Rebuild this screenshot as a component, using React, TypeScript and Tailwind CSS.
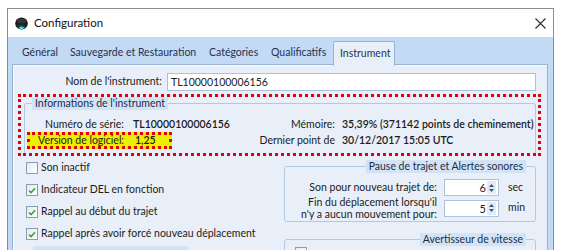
import React from "react";

const TABS = [
  { label: "Général", w: "w-[48px]" },
  { label: "Sauvegarde et Restauration", w: "w-[139px]" },
  { label: "Catégories", w: "w-[62px]" },
  { label: "Qualificatifs", w: "w-[69px]" },
];

function AppIcon() {
  return (
    <svg width="13" height="13" viewBox="0 0 13 13">
      <defs>
        <radialGradient id="glow" cx="0.5" cy="0.85" r="0.45">
          <stop offset="0" stopColor="#8ff6ff" />
          <stop offset="0.6" stopColor="#1fc8dc" />
          <stop offset="1" stopColor="#0b3f48" />
        </radialGradient>
      </defs>
      <ellipse cx="6.5" cy="6.5" rx="6.3" ry="6" fill="#1b1b1b" />
      <ellipse cx="6.5" cy="4" rx="4.5" ry="2.5" fill="#4a4a4a" opacity="0.6" />
      <ellipse cx="6.5" cy="9.6" rx="4.2" ry="2.4" fill="url(#glow)" />
    </svg>
  );
}

function CheckBox({ checked }: { checked?: boolean }) {
  return (
    <span className="w-[12px] h-[12px] shrink-0 border border-[#8c9db3] bg-gradient-to-br from-[#e4e9f0] to-white flex items-center justify-center">
      {checked && (
        <svg width="8" height="7" viewBox="0 0 8 7">
          <path d="M1 3.6 L3.1 5.6 L7 1.2" fill="none" stroke="#3aa53a" strokeWidth="1.6" />
        </svg>
      )}
    </span>
  );
}

function Spin({ value }: { value: string }) {
  return (
    <div className="w-[55px] h-[17px] border border-[#abc1dd] bg-white flex items-center">
      <span className="flex-1 text-right leading-[15px] text-[11px]">{value}</span>
      <span className="w-[9px] h-[13px] mr-[2px] ml-[1px] bg-[#e2ebf6] flex flex-col items-center justify-center gap-[2px]">
        <svg width="5" height="3" viewBox="0 0 5 3">
          <path d="M0 3 L2.5 0 L5 3 Z" fill="#3c5676" />
        </svg>
        <svg width="5" height="3" viewBox="0 0 5 3">
          <path d="M0 0 L2.5 3 L5 0 Z" fill="#3c5676" />
        </svg>
      </span>
    </div>
  );
}

export default function App() {
  return (
    <div className="w-[564px] h-[250px] bg-white overflow-hidden pt-[8px] pl-[7px] font-[Lato,sans-serif] text-[10.5px] text-[#1b1b1b]">
      <div className="w-[547px] h-[260px] border border-[#8d8d8d] border-b-0 bg-[#c3daf5]">
        {/* title bar */}
        <div className="h-[28px] bg-white flex items-center pl-[7px] pr-[7px]">
          <AppIcon />
          <span className="ml-[6px] text-[11.5px] text-[#111]">Configuration</span>
          <svg className="ml-auto" width="11" height="11" viewBox="0 0 11 11">
            <path d="M0.5 0.5 L10.5 10.5 M10.5 0.5 L0.5 10.5" stroke="#2b2b2b" strokeWidth="1.1" />
          </svg>
        </div>

        {/* tabs */}
        <div className="pt-[4px] pl-[7px] flex h-[28px] items-stretch text-[#1f3350]">
          {TABS.map((t) => (
            <div key={t.label} className={`${t.w} pl-[7px] flex items-center whitespace-nowrap`}>
              {t.label}
            </div>
          ))}
          <div className="w-[62px] h-[25px] pl-[6px] flex items-center relative z-10 bg-[#e9eff8] border border-b-0 border-[#98b2d4] rounded-t-[2px]">
            Instrument
          </div>
        </div>

        {/* panel */}
        <div className="ml-[4px] -mt-px w-[536px] h-[200px] border border-[#98b2d4] bg-[#e9eff8] shadow-[inset_1px_1px_0_#f7faff]">
          <div className="flex items-center mt-[8px]">
            <span className="w-[149px] shrink-0 text-right whitespace-nowrap">Nom de l'instrument:</span>
            <div className="ml-[5px] w-[369px] h-[18px] border border-[#abc1dd] bg-white pl-[3px] leading-[16px]">
              TL10000100006156
            </div>
          </div>

          {/* highlighted info group */}
          <div className="mt-[3px] ml-[5px] w-[523px] h-[62px] border-[3px] border-dotted border-[#e3000f]">
            <fieldset className="ml-[3px] w-[512px] h-[56px] border border-b-0 border-[#b4c8e2] rounded-t-[3px]">
              <legend className="ml-[7px] px-[3px] h-[13px] leading-[13px] bg-[#d3e3f6] text-[#1d2d44] whitespace-nowrap">
                Informations de l'instrument
              </legend>
              <div className="mt-[7px] ml-[2px] flex items-center h-[15px] whitespace-nowrap">
                <div className="w-[145px] shrink-0 flex">
                  <span className="w-[97px] shrink-0 text-right">Numéro de série:</span>
                  <span className="ml-[9px] font-semibold">TL10000100006156</span>
                </div>
                <span className="w-[163px] shrink-0 text-right">Mémoire:</span>
                <span className="ml-[7px] font-semibold">35,39% (371142 points de cheminement)</span>
              </div>
              <div className="ml-[2px] flex items-center h-[17px] whitespace-nowrap">
                <div className="w-[145px] shrink-0 h-[17px] border-[3px] border-dotted border-[#e3000f] bg-[#ebf000] flex items-center">
                  <span className="w-[94px] shrink-0 text-right">Version de logiciel:</span>
                  <span className="ml-[11px] font-semibold">1,25</span>
                </div>
                <span className="w-[163px] shrink-0 text-right">Dernier point de</span>
                <span className="ml-[7px] font-semibold">30/12/2017 15:05 UTC</span>
              </div>
            </fieldset>
          </div>

          <div className="flex">
            {/* left column */}
            <div className="w-[271px] shrink-0 mt-[1px]">
              {[
                { label: "Son inactif", checked: false },
                { label: "Indicateur DEL en fonction", checked: true },
                { label: "Rappel au début du trajet", checked: true },
                { label: "Rappel après avoir forcé nouveau déplacement", checked: true },
              ].map((r) => (
                <div key={r.label} className="h-[22px] pl-[13px] flex items-center gap-[3px] whitespace-nowrap">
                  <CheckBox checked={r.checked} />
                  <span>{r.label}</span>
                </div>
              ))}
              <div className="mt-[1px] ml-[20px] w-[155px] h-[10px] bg-[#d3e3f6]" />
            </div>

            {/* right column */}
            <div className="w-[252px] shrink-0">
              <fieldset className="mt-[4px] border border-[#b4c8e2] rounded-[3px] pb-[1px]">
                <legend className="ml-auto mr-[9px] px-[3px] h-[13px] leading-[13px] bg-[#d3e3f6] text-[#1d2d44] whitespace-nowrap">
                  Pause de trajet et Alertes sonores
                </legend>
                <div className="mt-[6px] flex items-center">
                  <span className="w-[152px] shrink-0 text-right whitespace-nowrap">Son pour nouveau trajet de:</span>
                  <div className="ml-[7px]">
                    <Spin value="6" />
                  </div>
                  <span className="ml-[9px]">sec</span>
                </div>
                <div className="flex items-center">
                  <span className="w-[152px] shrink-0 text-right leading-[12px] whitespace-nowrap">
                    Fin du déplacement lorsqu'il
                    <br />
                    n'y a aucun mouvement pour:
                  </span>
                  <div className="ml-[7px]">
                    <Spin value="5" />
                  </div>
                  <span className="ml-[9px]">min</span>
                </div>
              </fieldset>
              <fieldset className="mt-[11px] border border-[#b4c8e2] rounded-[3px] h-[40px]">
                <legend className="ml-auto mr-[9px] px-[3px] h-[13px] leading-[13px] bg-[#d3e3f6] text-[#1d2d44] whitespace-nowrap">
                  Avertisseur de vitesse
                </legend>
                <div className="mt-px pl-[10px]">
                  <CheckBox />
                </div>
              </fieldset>
            </div>
          </div>
        </div>
      </div>
    </div>
  );
}
